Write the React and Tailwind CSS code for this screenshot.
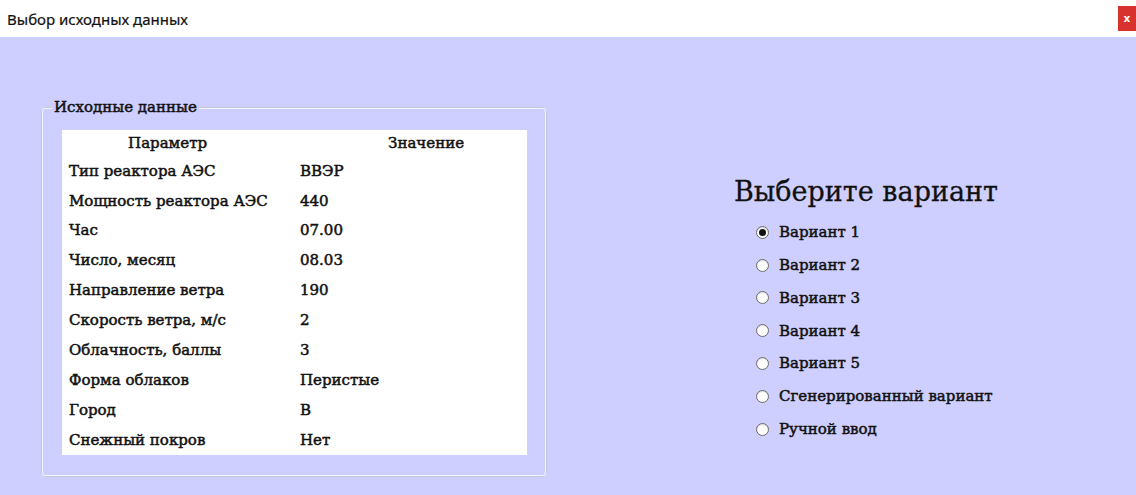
import React from "react";

const rows = [
  ["Тип реактора АЭС", "ВВЭР"],
  ["Мощность реактора АЭС", "440"],
  ["Час", "07.00"],
  ["Число, месяц", "08.03"],
  ["Направление ветра", "190"],
  ["Скорость ветра, м/с", "2"],
  ["Облачность, баллы", "3"],
  ["Форма облаков", "Перистые"],
  ["Город", "В"],
  ["Снежный покров", "Нет"],
];

const variants = [
  "Вариант 1",
  "Вариант 2",
  "Вариант 3",
  "Вариант 4",
  "Вариант 5",
  "Сгенерированный вариант",
  "Ручной ввод",
];

const serif = { fontFamily: '"DejaVu Serif", "Liberation Serif", serif' };

function Radio({ checked }) {
  return (
    <span className="flex h-[13px] w-[13px] shrink-0 items-center justify-center rounded-full border border-[#6b6b6b] bg-white shadow-[inset_0_1px_1px_rgba(0,0,0,0.15)] [-webkit-text-stroke:0]">
      {checked && <span className="h-[7px] w-[7px] rounded-full bg-[#111]" />}
    </span>
  );
}

export default function App() {
  return (
    <div className="flex h-[495px] w-[1136px] flex-col overflow-hidden bg-white">
      {/* window caption */}
      <div className="flex h-[37px] items-start justify-between bg-white">
        <span
          className="pl-[7px] pt-[8px] text-[15px] text-[#111] [-webkit-text-stroke:0.2px_#111]"
          style={{ fontFamily: '"Noto Sans", "Open Sans", sans-serif' }}
        >
          Выбор исходных данных
        </span>
        <span className="mt-[6px] flex h-[25px] w-[18px] items-center justify-center bg-[#d7322e] text-[11px] font-bold text-white">
          x
        </span>
      </div>

      {/* client area */}
      <div className="flex flex-1 bg-[#cfcfff] text-[#111] [-webkit-text-stroke:0.5px_#111]" style={serif}>
        {/* left group */}
        <div className="pl-[41px] pt-[70px]">
          <div className="relative h-[370px] w-[506px] rounded-[4px] border-2 border-[#f4f4ff] outline outline-1 outline-[#c4c8da] -outline-offset-1">
            <span className="absolute left-[9px] top-[-12px] bg-[#cfcfff] px-[2px] text-[15px] leading-[20px]">
              Исходные данные
            </span>
            <div className="ml-[19px] mt-[21px] w-[465px] bg-white text-[15px]">
              <div className="flex h-[26px] items-center">
                <span className="w-[228px] text-center">Параметр</span>
                <span className="w-[270px] pl-[52px] text-center">Значение</span>
              </div>
              {rows.map(([k, v]) => (
                <div key={k} className="flex h-[29.9px] items-center">
                  <span className="w-[238px] shrink-0 pl-[7px]">{k}</span>
                  <span>{v}</span>
                </div>
              ))}
            </div>
          </div>
        </div>

        {/* right: variant choice */}
        <div className="pl-[187px] pt-[137px]">
          <div className="text-[27px] leading-[36px] [-webkit-text-stroke:0.3px_#111]">Выберите вариант</div>
          <div className="mt-[6px] flex flex-col pl-[22px]">
            {variants.map((v, i) => (
              <label key={v} className="flex h-[32.8px] items-center gap-[10px] text-[15px]">
                <Radio checked={i === 0} />
                <span>{v}</span>
              </label>
            ))}
          </div>
        </div>
      </div>
    </div>
  );
}
